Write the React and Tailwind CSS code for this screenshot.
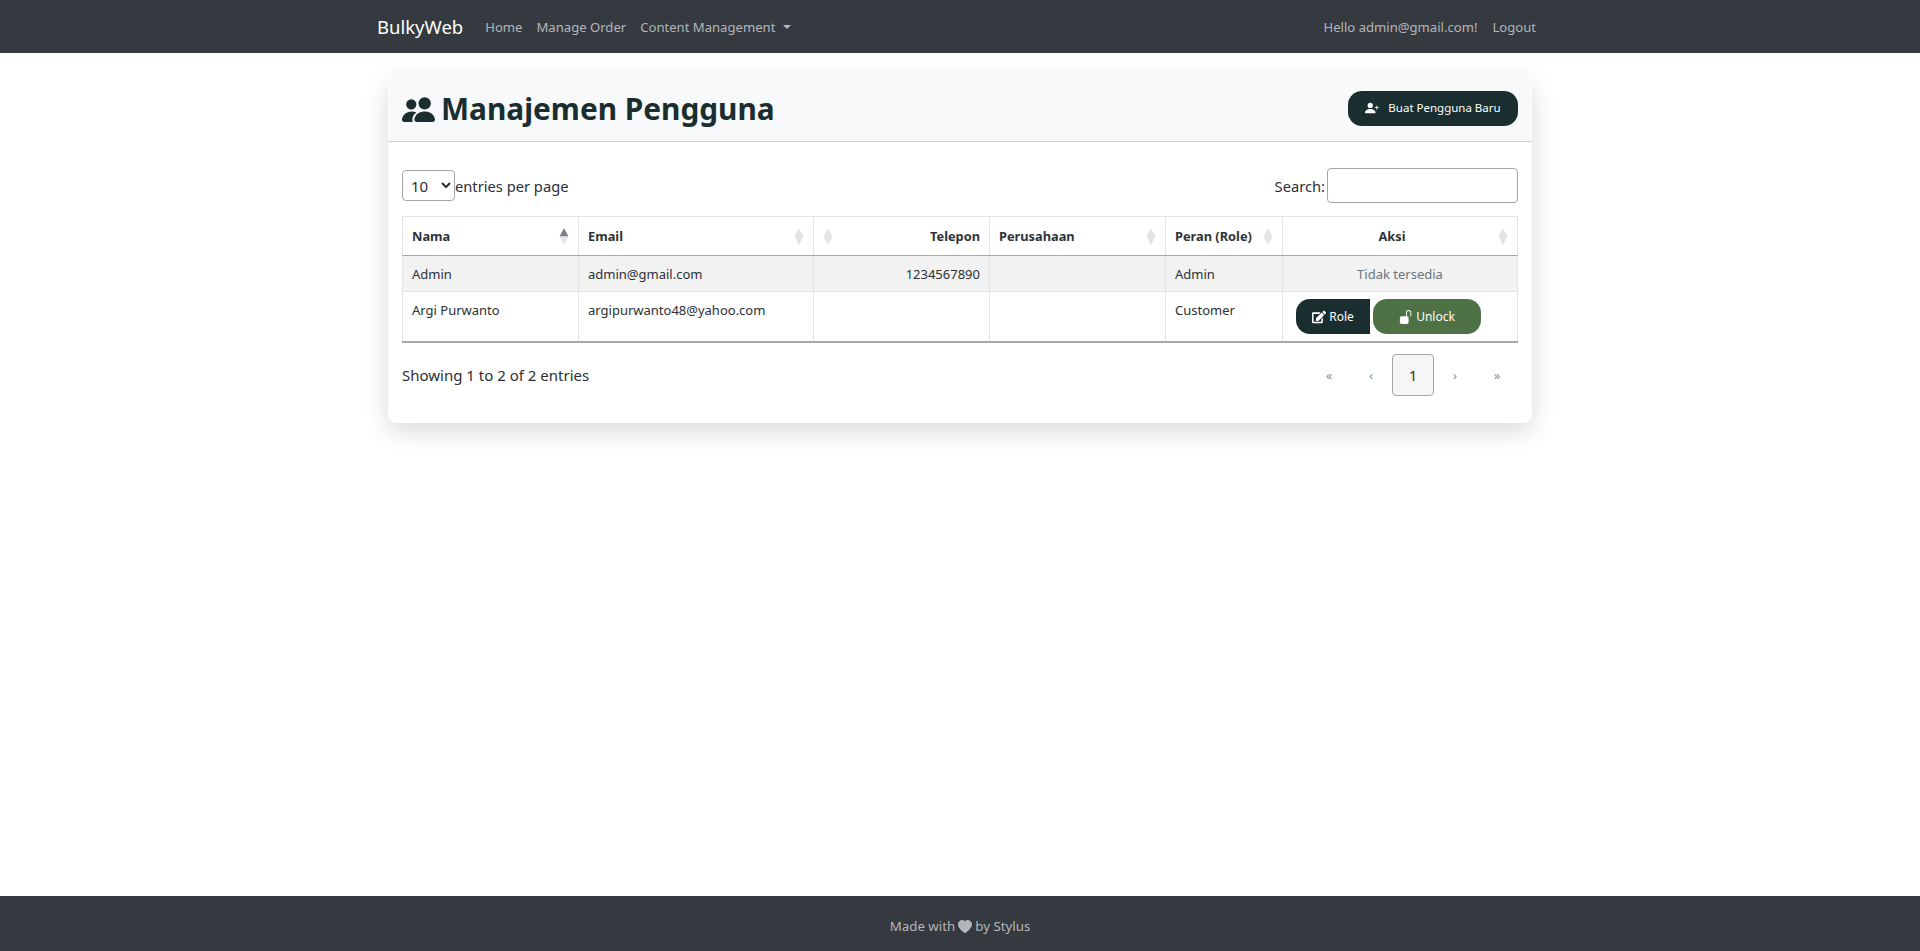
import { BsPeopleFill, BsPersonPlusFill, BsUnlockFill, BsHeartFill } from 'react-icons/bs';
import { FaEdit } from 'react-icons/fa';

const SortIcon = ({ active }) => (
  <svg className="w-[10px] h-[17px] shrink-0" viewBox="0 0 10 17">
    <path d="M5 0L9.5 8.5H0.5z" fill={active ? '#7b8086' : '#e3e4e6'} />
    <path d="M5 17L9.5 8.5H0.5z" fill="#e3e4e6" />
  </svg>
);

const HeadCell = ({ label, align, active, iconLeft }) => (
  <th className="border border-[#e4e4e4] border-b-[#a8a8a8] pl-[9px] pr-[9px] font-bold text-[12.8px] text-[#2f3338]">
    <div className="flex items-center justify-between">
      {iconLeft && <SortIcon />}
      <span className={`pt-[2px] ${align === 'center' ? 'flex-1 text-center pr-[6px]' : align === 'right' ? 'flex-1 text-right' : ''}`}>{label}</span>
      {!iconLeft && <SortIcon active={active} />}
    </div>
  </th>
);

const Cell = ({ children, className = '' }) => (
  <td className={`border border-[#e4e4e4] pl-[9px] pr-[9px] align-top pt-[8px] text-[13px] leading-[20px] ${className}`}>{children}</td>
);

const PageLink = ({ children }) => (
  <span className="w-[42px] h-[42px] pt-[2px] flex items-center justify-center text-[13px] text-[#8b8f94]">{children}</span>
);

export default function App() {
  return (
    <div className="min-h-screen flex flex-col bg-white text-[#2b3036] font-['Noto_Sans','Open_Sans',sans-serif]">
      <nav className="h-[53px] bg-[#343a40] flex items-center pl-[377px] pr-[384px] text-[13.1px] text-[#b4b6b9]">
        <span className="text-[18.5px] text-white mr-[22px]">BulkyWeb</span>
        <span className="mr-[14px] pt-[2px]">Home</span>
        <span className="mr-[14px] pt-[2px]">Manage Order</span>
        <span className="pt-[2px]">Content Management</span>
        <span className="ml-[8px] border-x-[4px] border-x-transparent border-t-[4px] border-t-[#b4b6b9]"></span>
        <span className="ml-auto mr-[15px] pt-[2px]">Hello admin@gmail.com!</span>
        <span className="pt-[2px]">Logout</span>
      </nav>

      <main className="flex-1">
        <div className="w-[1144px] mx-auto mt-[22px] rounded-lg shadow-[0_8px_24px_rgba(0,0,0,0.15)] bg-white">
          <div className="h-[67px] bg-[#f8f9fa] rounded-t-lg border-b border-[#cfd0d2] flex items-center justify-between pl-[14px] pr-[14px]">
            <h2 className="flex items-center gap-[6px] pt-[2px] text-[29.8px] font-bold text-[#1a2e30]">
              <BsPeopleFill className="w-[33px] h-[33px]" />
              Manajemen Pengguna
            </h2>
            <button className="w-[170px] h-[35px] rounded-[14px] bg-[#1a2e30] text-white text-[11.5px] flex items-center justify-center gap-[9px]">
              <BsPersonPlusFill className="w-[14px] h-[14px]" />
              Buat Pengguna Baru
            </button>
          </div>

          <div className="px-[14px]">
            <div className="flex items-center justify-between pt-[13px] h-[74px] text-[14.7px]">
              <div className="flex items-center">
                <select className="w-[53px] h-[31px] border border-[#a6a6a6] rounded pl-[4px] text-[15px]">
                  <option>10</option>
                </select>
                <span className="pt-[2px]">entries per page</span>
              </div>
              <div className="flex items-center gap-[2px]">
                <span className="pt-[2px]">Search:</span>
                <input className="w-[191px] h-[35px] border border-[#a6a6a6] rounded" />
              </div>
            </div>

            <table className="w-full table-fixed border-collapse">
              <colgroup>
                <col className="w-[176px]" />
                <col className="w-[235px]" />
                <col className="w-[176px]" />
                <col className="w-[176px]" />
                <col className="w-[117px]" />
                <col />
              </colgroup>
              <thead>
                <tr className="h-[39px]">
                  <HeadCell label="Nama" active />
                  <HeadCell label="Email" />
                  <HeadCell label="Telepon" align="right" iconLeft />
                  <HeadCell label="Perusahaan" />
                  <HeadCell label="Peran (Role)" />
                  <HeadCell label="Aksi" align="center" />
                </tr>
              </thead>
              <tbody>
                <tr className="h-[36px] bg-[#f2f2f2]">
                  <Cell>Admin</Cell>
                  <Cell>admin@gmail.com</Cell>
                  <Cell className="text-right">1234567890</Cell>
                  <Cell></Cell>
                  <Cell>Admin</Cell>
                  <Cell className="text-center text-[#6c757d]">Tidak tersedia</Cell>
                </tr>
                <tr className="h-[50px] border-b-2 border-b-[#a8a8a8]">
                  <Cell>Argi Purwanto</Cell>
                  <Cell>argipurwanto48@yahoo.com</Cell>
                  <Cell></Cell>
                  <Cell></Cell>
                  <Cell>Customer</Cell>
                  <td className="border border-[#e4e4e4] border-b-[#a8a8a8] pl-[13px]">
                    <div className="flex gap-[3px] text-[12px] text-white">
                      <button className="w-[74px] h-[35px] pt-[1px] rounded-l-[14px] bg-[#1a2e30] flex items-center justify-center gap-[3px]">
                        <FaEdit className="w-[14px] h-[14px]" />
                        Role
                      </button>
                      <button className="w-[108px] h-[35px] pt-[1px] rounded-[14px] bg-[#4e7146] flex items-center justify-center gap-[3px]">
                        <BsUnlockFill className="w-[14px] h-[14px]" />
                        Unlock
                      </button>
                    </div>
                  </td>
                </tr>
              </tbody>
            </table>

            <div className="flex items-center justify-between mt-[11px] pb-[27px] text-[15px]">
              <span className="pt-[2px]">Showing 1 to 2 of 2 entries</span>
              <div className="flex items-center">
                <PageLink>«</PageLink>
                <PageLink>‹</PageLink>
                <span className="w-[42px] h-[42px] pt-[2px] flex items-center justify-center border border-[#a6a6a6] rounded-sm bg-[#f6f6f6] text-[#333]">1</span>
                <PageLink>›</PageLink>
                <PageLink>»</PageLink>
              </div>
            </div>
          </div>
        </div>
      </main>

      <footer className="h-[55px] pt-[6px] bg-[#343a40] flex items-center justify-center gap-[3px] text-[13.3px] text-[#b4b6b9]">
        Made with <BsHeartFill className="w-[14px] h-[14px]" /> by Stylus
      </footer>
    </div>
  );
}
